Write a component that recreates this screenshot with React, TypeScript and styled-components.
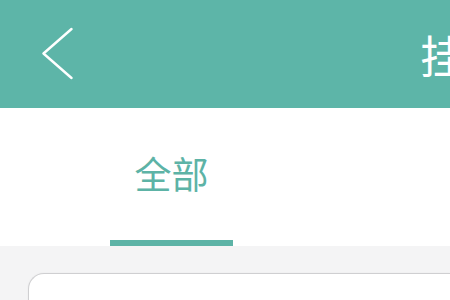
import styled, { createGlobalStyle } from "styled-components";

const GlobalStyle = createGlobalStyle`
  html, body {
    margin: 0;
    padding: 0;
    background: #f4f4f5;
    font-family: "Noto Sans CJK SC", "Noto Sans", sans-serif;
  }
  #root {
    width: 450px;
    height: 300px;
    overflow: hidden;
  }
`;

const Page = styled.div`
  width: 450px;
  height: 300px;
  overflow: hidden;
  display: flex;
  flex-direction: column;
  background: #f4f4f5;
`;

const Header = styled.header`
  height: 108px;
  flex-shrink: 0;
  display: flex;
  align-items: center;
  padding-left: 42px;
  background: #5db5a8;
  overflow: hidden;
`;

const BackButton = styled.button`
  width: 32px;
  height: 56px;
  padding: 0;
  border: none;
  background: none;
  display: flex;
  align-items: center;
  justify-content: center;
  cursor: pointer;
`;

const Title = styled.h1`
  margin: 0 0 0 346px;
  flex-shrink: 0;
  font-size: 45px;
  font-weight: 400;
  color: #ffffff;
  white-space: nowrap;
  line-height: 1;
`;

const TabBar = styled.nav`
  height: 138px;
  flex-shrink: 0;
  display: flex;
  padding-left: 110px;
  background: #ffffff;
`;

const Tab = styled.div<{ $active?: boolean }>`
  width: 123px;
  display: flex;
  flex-direction: column;
  align-items: center;
`;

const TabLabel = styled.span<{ $active?: boolean }>`
  flex: 1;
  display: flex;
  align-items: center;
  padding-bottom: 2px;
  font-size: 37px;
  color: ${(p) => (p.$active ? "#5db3a6" : "#666666")};
`;

const Indicator = styled.div`
  width: 100%;
  height: 6px;
  background: #5db3a6;
`;

const Content = styled.main`
  flex: 1;
  padding: 27px 0 0 28px;
`;

const Card = styled.div`
  height: 100px;
  background: #ffffff;
  border: 1.5px solid #cfcfd1;
  border-right: none;
  border-radius: 16px 0 0 16px;
  box-shadow: 0 0 2px rgba(0, 0, 0, 0.06);
`;

export default function App() {
  return (
    <Page>
      <GlobalStyle />
      <Header>
        <BackButton aria-label="返回">
          <svg width="32" height="56" viewBox="0 0 32 56" fill="none">
            <polyline
              points="29.5,3 1.5,27.5 29.5,52"
              stroke="#ffffff"
              strokeWidth="2.4"
              strokeLinecap="round"
              strokeLinejoin="round"
            />
          </svg>
        </BackButton>
        <Title>挂号记录</Title>
      </Header>
      <TabBar>
        <Tab $active>
          <TabLabel $active>全部</TabLabel>
          <Indicator />
        </Tab>
      </TabBar>
      <Content>
        <Card />
      </Content>
    </Page>
  );
}
